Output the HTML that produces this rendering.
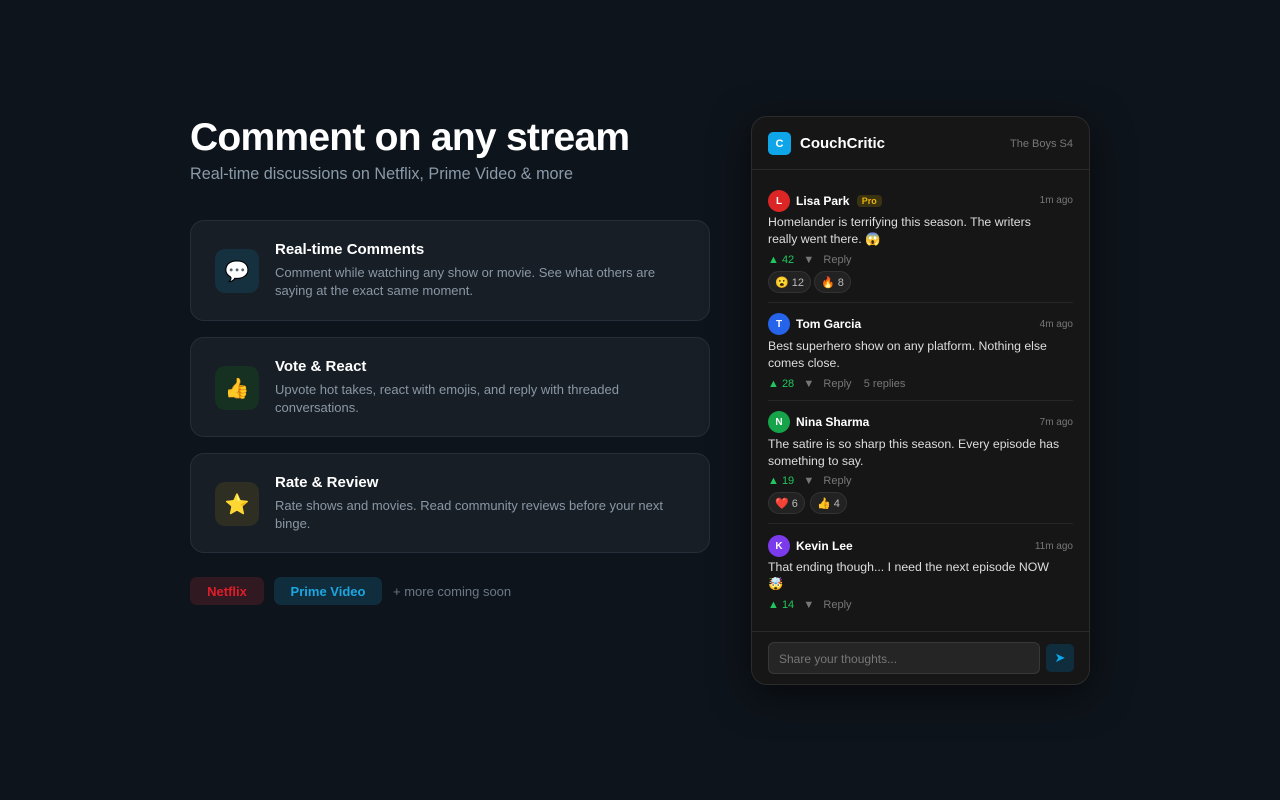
<!DOCTYPE html>
<html><head><meta charset="utf-8"><style>
*{box-sizing:border-box;margin:0;padding:0}
body{width:1280px;height:800px;background:#0e141b;font-family:"Liberation Sans","Noto Sans CJK JP",sans-serif;position:relative;overflow:hidden;color:#fff}
.abs{position:absolute}
h1{position:absolute;left:190px;top:116px;font-size:39px;font-weight:700;letter-spacing:-0.75px;color:#fff}
.sub{left:190px;top:165px;font-size:16.2px;color:#8a9aa9}
.card{position:absolute;left:190px;width:520px;height:101px;background:#171e26;border:1px solid #262f39;border-radius:14px}
.ic{position:absolute;left:24px;top:28px;width:44px;height:44px;border-radius:10px;display:flex;align-items:center;justify-content:center;font-size:20px}
.ct{position:absolute;left:84px;top:20px;font-size:15px;font-weight:700;color:#fff}
.cd{position:absolute;left:84px;top:43px;width:415px;font-size:13px;line-height:18px;color:#8a97a4}
.pill{position:absolute;top:577px;height:28px;border-radius:7px;font-size:13px;font-weight:700;display:flex;align-items:center;justify-content:center}
.panel{position:absolute;left:751px;top:116px;width:339px;height:569px;background:#161616;border:1px solid #2b2b2b;border-radius:16px;box-shadow:0 10px 40px rgba(0,0,0,.5)}
.av{position:absolute;left:16px;width:22px;height:22px;border-radius:50%;font-size:10px;font-weight:700;display:flex;align-items:center;justify-content:center;color:#fff}
.nm{position:absolute;left:44px;font-size:12px;font-weight:700;color:#fff}
.tm{position:absolute;right:16px;font-size:10px;color:#777}
.tx{position:absolute;left:16px;width:320px;font-size:12.3px;line-height:17px;color:#ddd;white-space:nowrap}
.vt{position:absolute;left:16px;font-size:11px;color:#777;white-space:pre}
.vt b{color:#22c55e;font-weight:400}
.rx{position:absolute;height:22px;border:1px solid #333;background:#222;border-radius:11px;font-size:11px;color:#bbb;display:flex;align-items:center;padding:0 6px;gap:4px}
.dv{position:absolute;left:16px;right:16px;height:1px;background:#262626}
</style></head><body>
<h1>Comment on any stream</h1>
<div class="abs sub">Real-time discussions on Netflix, Prime Video &amp; more</div>

<div class="card" style="top:220px"><div class="ic" style="background:#15303f">💬</div><div class="ct">Real-time Comments</div><div class="cd">Comment while watching any show or movie. See what others are saying at the exact same moment.</div></div>
<div class="card" style="top:337px;height:100px"><div class="ic" style="background:#163022">👍</div><div class="ct">Vote &amp; React</div><div class="cd">Upvote hot takes, react with emojis, and reply with threaded conversations.</div></div>
<div class="card" style="top:453px;height:100px"><div class="ic" style="background:#2f2e22">⭐</div><div class="ct">Rate &amp; Review</div><div class="cd">Rate shows and movies. Read community reviews before your next binge.</div></div>

<div class="pill" style="left:190px;width:74px;background:#301920;color:#e11d2a">Netflix</div>
<div class="pill" style="left:274px;width:108px;background:#0f2d3c;color:#1ea5e0">Prime Video</div>
<div class="abs" style="left:393px;top:584px;font-size:13px;color:#6b7785">+ more coming soon</div>

<div class="panel">
<div class="abs" style="left:16px;top:15px;width:23px;height:23px;border-radius:5px;background:#0ea5e9;font-size:11px;font-weight:700;display:flex;align-items:center;justify-content:center">C</div>
<div class="abs" style="left:48px;top:18px;font-size:15px;font-weight:700">CouchCritic</div>
<div class="abs" style="right:16px;top:21px;font-size:11px;color:#777">The Boys S4</div>
<div class="abs" style="left:0;right:0;top:52px;height:1px;background:#2a2a2a"></div>

<div class="av" style="top:73px;background:#dc2626">L</div><div class="nm" style="top:77px">Lisa Park <span style="display:inline-block;margin-left:4px;background:#3a3210;color:#eab308;font-size:9px;padding:1px 5px;border-radius:4px;vertical-align:1px">Pro</span></div><div class="tm" style="top:78px">1m ago</div>
<div class="tx" style="top:97px">Homelander is terrifying this season. The writers<br>really went there. 😱</div>
<div class="vt" style="top:137px"><b>▲ 42</b>   ▼   Reply</div>
<div class="rx" style="left:16px;top:154px">😮 12</div><div class="rx" style="left:62px;top:154px">🔥 8</div>
<div class="dv" style="top:185px"></div>

<div class="av" style="top:196px;background:#2563eb">T</div><div class="nm" style="top:200px">Tom Garcia</div><div class="tm" style="top:202px">4m ago</div>
<div class="tx" style="top:221px">Best superhero show on any platform. Nothing else<br>comes close.</div>
<div class="vt" style="top:261px"><b>▲ 28</b>   ▼   Reply    5 replies</div>
<div class="dv" style="top:283px"></div>

<div class="av" style="top:294px;background:#16a34a">N</div><div class="nm" style="top:298px">Nina Sharma</div><div class="tm" style="top:300px">7m ago</div>
<div class="tx" style="top:319px">The satire is so sharp this season. Every episode has<br>something to say.</div>
<div class="vt" style="top:358px"><b>▲ 19</b>   ▼   Reply</div>
<div class="rx" style="left:16px;top:375px">❤️ 6</div><div class="rx" style="left:58px;top:375px">👍 4</div>
<div class="dv" style="top:406px"></div>

<div class="av" style="top:418px;background:#7c3aed">K</div><div class="nm" style="top:422px">Kevin Lee</div><div class="tm" style="top:424px">11m ago</div>
<div class="tx" style="top:442px">That ending though... I need the next episode NOW<br>🤯</div>
<div class="vt" style="top:482px"><b>▲ 14</b>   ▼   Reply</div>

<div class="abs" style="left:0;right:0;top:514px;height:1px;background:#2a2a2a"></div>
<div class="abs" style="left:16px;top:525px;width:272px;height:32px;background:#252525;border:1px solid #383838;border-radius:6px;font-size:12px;color:#777;padding:9px 10px">Share your thoughts...</div>
<div class="abs" style="left:294px;top:527px;width:28px;height:28px;background:#0f2d3c;border-radius:5px;color:#0ea5e9;font-size:13px;display:flex;align-items:center;justify-content:center">➤</div>
</div>
</body></html>
